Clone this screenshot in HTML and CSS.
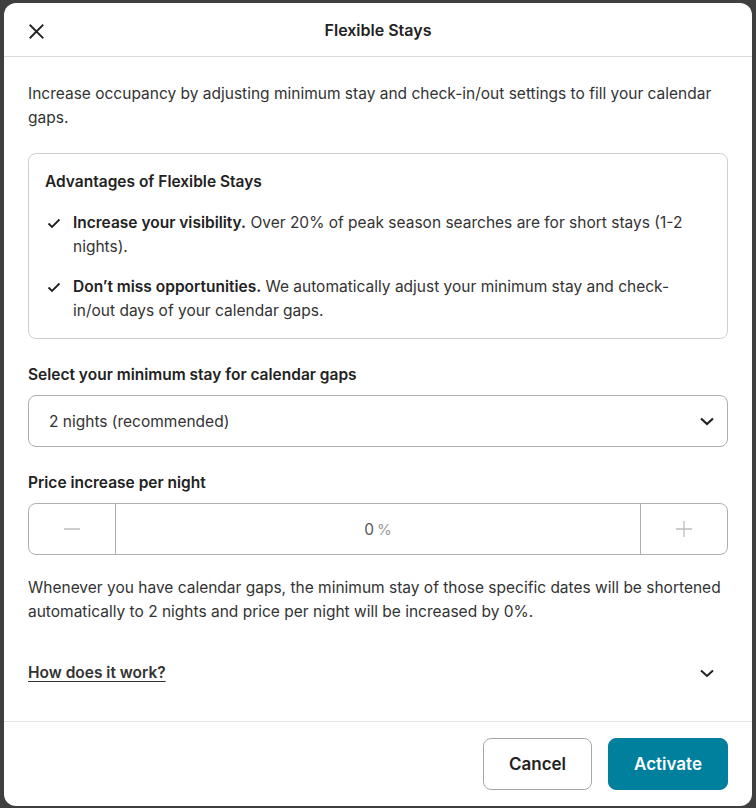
FILE: index.html
```html
<!DOCTYPE html>
<html lang="en">
<head>
<meta charset="utf-8">
<title>Flexible Stays</title>
<link rel="stylesheet" href="styles.css">
</head>
<body>
<div class="overlay">
  <div class="modal">
    <header class="modal-header">
      <button class="close-btn" aria-label="Close">
        <svg width="16" height="16" viewBox="0 0 16 16"><path d="M1.5 1.5L14.5 14.5M14.5 1.5L1.5 14.5" stroke="#222" stroke-width="2" fill="none" stroke-linecap="square"/></svg>
      </button>
      <h1 class="modal-title">Flexible Stays</h1>
    </header>
    <main class="modal-body">
      <p class="intro">Increase occupancy by adjusting minimum stay and check-in/out settings to fill your calendar gaps.</p>
      <section class="advantages">
        <h2 class="adv-title">Advantages of Flexible Stays</h2>
        <ul class="adv-list">
          <li class="adv-item">
            <svg class="check" width="16" height="16" viewBox="0 0 16 16"><path d="M2.5 8.5L6 12L13.5 4.5" stroke="#222" stroke-width="1.8" fill="none"/></svg>
            <span><strong>Increase your visibility.</strong> Over 20% of peak season searches are for short stays (1-2 nights).</span>
          </li>
          <li class="adv-item">
            <svg class="check" width="16" height="16" viewBox="0 0 16 16"><path d="M2.5 8.5L6 12L13.5 4.5" stroke="#222" stroke-width="1.8" fill="none"/></svg>
            <span><strong>Don’t miss opportunities.</strong> We automatically adjust your minimum stay and check-in/out days of your calendar gaps.</span>
          </li>
        </ul>
      </section>

      <label class="field-label">Select your minimum stay for calendar gaps</label>
      <div class="select">
        <span class="select-value">2 nights (recommended)</span>
        <svg width="16" height="16" viewBox="0 0 16 16"><path d="M2 5.5L8 11L14 5.5" stroke="#222" stroke-width="2.2" fill="none"/></svg>
      </div>

      <label class="field-label">Price increase per night</label>
      <div class="stepper">
        <div class="step-btn step-left">
          <svg width="18" height="18" viewBox="0 0 18 18"><path d="M1 9H17" stroke="#bdbdbd" stroke-width="1.5"/></svg>
        </div>
        <div class="step-value"><span class="num">0</span> <span class="pct">%</span></div>
        <div class="step-btn step-right">
          <svg width="18" height="18" viewBox="0 0 18 18"><path d="M1 9H17M9 1V17" stroke="#bdbdbd" stroke-width="1.3"/></svg>
        </div>
      </div>

      <p class="summary">Whenever you have calendar gaps, the minimum stay of those specific dates will be shortened automatically to 2 nights and price per night will be increased by 0%.</p>

      <div class="how-row">
        <a class="how-link">How does it work?</a>
        <svg class="how-chev" width="16" height="16" viewBox="0 0 16 16"><path d="M2 5.5L8 11L14 5.5" stroke="#222" stroke-width="2" fill="none"/></svg>
      </div>
    </main>
    <footer class="modal-footer">
      <button class="btn btn-secondary">Cancel</button>
      <button class="btn btn-primary">Activate</button>
    </footer>
  </div>
</div>
</body>
</html>
```
FILE: styles.css
```css
* { box-sizing: border-box; }
html, body {
  margin: 0;
  padding: 0;
  height: 100%;
}
body {
  background: #3f3f3f;
  font-family: Inter, "Noto Sans", "Liberation Sans", sans-serif;
  color: #333;
  overflow: hidden;
}
.overlay {
  display: flex;
  justify-content: center;
  padding-top: 3px;
}
.modal {
  width: 748px;
  height: 803px;
  background: #fff;
  border-radius: 12px;
  display: flex;
  flex-direction: column;
  overflow: hidden;
}
.modal-header {
  height: 54px;
  flex: none;
  border-bottom: 1px solid #d9d9d9;
  display: flex;
  align-items: center;
  justify-content: center;
  position: relative;
}
.close-btn {
  position: absolute;
  left: 22px;
  top: 18px;
  width: 20px;
  height: 20px;
  padding: 0;
  border: 0;
  background: none;
  display: flex;
  align-items: center;
  justify-content: center;
}
.close-btn svg { width: 15px; height: 15px; }
.modal-title {
  margin: 0;
  font-size: 16px;
  font-weight: 600;
  color: #222;
  line-height: 24px;
}
.modal-body {
  flex: 1;
  padding: 25px 24px 0 24px;
  display: flex;
  flex-direction: column;
}
.intro {
  margin: 0 0 23px;
  font-size: 15.5px;
  line-height: 24px;
  color: #333;
}
.advantages {
  border: 1px solid #cfcfcf;
  border-radius: 8px;
  padding: 16px 16px 15px 16px;
  margin-bottom: 24px;
}
.adv-title {
  margin: 0 0 17px;
  font-size: 15.5px;
  font-weight: 600;
  line-height: 24px;
  color: #222;
}
.adv-list {
  list-style: none;
  margin: 0;
  padding: 0;
  display: flex;
  flex-direction: column;
  gap: 16px;
}
.adv-item {
  display: flex;
  gap: 11px;
  font-size: 15.5px;
  line-height: 24px;
  color: #333;
}
.adv-item strong { font-weight: 600; color: #222; }
.check {
  flex: none;
  margin-top: 4px;
  margin-left: 1px;
}
.field-label {
  display: block;
  font-size: 15.5px;
  font-weight: 600;
  line-height: 24px;
  color: #222;
  margin-bottom: 8px;
}
.select {
  height: 52px;
  border: 1px solid #b3aeaa;
  border-radius: 8px;
  display: flex;
  align-items: center;
  justify-content: space-between;
  padding: 0 12px 0 20px;
  margin-bottom: 24px;
}
.select-value {
  font-size: 15.5px;
  color: #333;
}
.stepper {
  height: 52px;
  border: 1px solid #b3aeaa;
  border-radius: 8px;
  display: flex;
  align-items: stretch;
  margin-bottom: 21px;
}
.step-btn {
  width: 87px;
  flex: none;
  display: flex;
  align-items: center;
  justify-content: center;
}
.step-left { border-right: 1px solid #b3aeaa; }
.step-right { border-left: 1px solid #b3aeaa; }
.step-value {
  flex: 1;
  display: flex;
  align-items: center;
  justify-content: center;
  gap: 3px;
  font-size: 15.5px;
}
.step-value .num { color: #555; }
.step-value .pct { color: #9a9a9a; font-size: 15px; }
.summary {
  margin: 0;
  font-size: 15.5px;
  line-height: 24px;
  color: #333;
}
.how-row {
  margin-top: 25px;
  padding: 12px 0;
  display: flex;
  align-items: center;
  justify-content: space-between;
}
.how-link {
  font-size: 15.5px;
  font-weight: 600;
  line-height: 24px;
  color: #333;
  text-decoration: underline;
  text-underline-offset: 3px;
}
.how-chev { margin-right: 13px; }
.modal-footer {
  flex: none;
  border-top: 1px solid #e3e3e3;
  padding: 16px 24px 16px;
  display: flex;
  justify-content: flex-end;
  gap: 16px;
  height: 85px;
}
.btn {
  height: 52px;
  padding: 0 25px;
  border-radius: 8px;
  font-family: Inter, "Noto Sans", "Liberation Sans", sans-serif;
  font-size: 17px;
  font-weight: 600;
}
.btn-secondary {
  background: #fff;
  border: 1px solid #a8a8a8;
  color: #222;
}
.btn-primary {
  background: #00809d;
  border: 1px solid #00809d;
  color: #fff;
}
```
